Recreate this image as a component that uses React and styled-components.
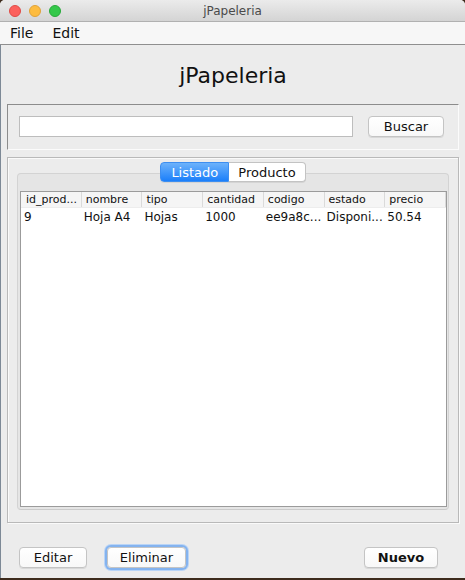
import React from "react";
import styled, { createGlobalStyle } from "styled-components";

const GlobalStyle = createGlobalStyle`
  html, body {
    margin: 0;
    padding: 0;
  }
  body {
    background: #3d2b1c;
    font-family: "DejaVu Sans", "Liberation Sans", sans-serif;
    color: #111;
  }
`;

const Window = styled.div`
  width: 465px;
  height: 578px;
  display: flex;
  flex-direction: column;
  background: #ececec;
  border-radius: 5px 5px 0 0;
  overflow: hidden;
`;

const TitleBar = styled.div`
  height: 22px;
  display: grid;
  grid-template-columns: 1fr auto 1fr;
  align-items: center;
  background: linear-gradient(#ebebeb, #d4d4d4);
  border-bottom: 1px solid #b1b1b1;
  box-sizing: border-box;
  font-size: 12px;
  color: #4a4a4a;
`;

const Lights = styled.div`
  display: flex;
  gap: 8px;
  padding-left: 9px;
`;

const Light = styled.span`
  width: 12px;
  height: 12px;
  border-radius: 50%;
  box-sizing: border-box;
  background: ${(p) => p.color};
  border: 1px solid ${(p) => p.edge};
`;

const MenuBar = styled.div`
  height: 22px;
  display: flex;
  align-items: center;
  gap: 19px;
  padding-left: 10px;
  background: #f7f7f7;
  border-bottom: 1px solid #8f8f8f;
  font-size: 14px;
  color: #111;
`;

const Content = styled.div`
  flex: 1;
  display: flex;
  flex-direction: column;
  padding: 0 6px 0 6px;
  border-left: 1px solid #7d8996;
`;

const Heading = styled.h1`
  margin: 0;
  height: 59px;
  display: flex;
  align-items: center;
  justify-content: center;
  padding-top: 2px;
  box-sizing: border-box;
  font-size: 22px;
  font-weight: normal;
  color: #111;
`;

const SearchPanel = styled.div`
  display: flex;
  align-items: center;
  padding: 11px 14px 12px 11px;
  border-top: 1px solid #8c8c8c;
  border-left: 1px solid #8c8c8c;
  border-bottom: 1px solid #fbfbfb;
  border-right: 1px solid #fbfbfb;
`;

const SearchInput = styled.div`
  flex: 1;
  height: 21px;
  box-sizing: border-box;
  background: #fff;
  border: 1px solid #bdbdbd;
`;

const Button = styled.button`
  height: 21px;
  width: ${(p) => p.w}px;
  margin-left: ${(p) => p.gap || 0}px;
  box-sizing: border-box;
  padding: 0;
  font-family: "DejaVu Sans", "Liberation Sans", sans-serif;
  font-size: 13px;
  font-weight: ${(p) => (p.primary ? "bold" : "normal")};
  color: #111;
  background: linear-gradient(#ffffff, #f8f8f8);
  border: 1px solid #c4c4c4;
  border-radius: 4px;
  box-shadow: ${(p) =>
    p.focused ? "0 0 0 2px #84b3ef, 0 0 0 3px #b9d4f6" : "0 1px 0 #d8d8d8"};
`;

const TabPanel = styled.div`
  margin-top: 7px;
  height: 366px;
  box-sizing: border-box;
  display: flex;
  flex-direction: column;
  padding: 4px 9px 12px 9px;
  border: 1px solid #b9b9b9;
  box-shadow: inset 1px 1px 0 #fafafa, 1px 1px 0 #fafafa;
`;

const TabsRow = styled.div`
  display: flex;
  justify-content: center;
  position: relative;
  z-index: 1;
`;

const Tab = styled.div`
  height: 20px;
  box-sizing: border-box;
  padding: 0 ${(p) => p.pad}px;
  display: flex;
  align-items: center;
  font-size: 13px;
  color: ${(p) => (p.active ? "#fff" : "#111")};
  background: ${(p) =>
    p.active ? "linear-gradient(#6cb2fb, #1b7ffa)" : "#fff"};
  border: 1px solid ${(p) => (p.active ? "#3d8ef0" : "#c3c3c3")};
  border-left-width: ${(p) => (p.active ? 1 : 0)}px;
  border-radius: ${(p) => (p.active ? "4px 0 0 4px" : "0 4px 4px 0")};
  box-shadow: 0 1px 0 #d4d4d4;
`;

const Pane = styled.div`
  flex: 1;
  margin-top: -9px;
  display: flex;
  flex-direction: column;
  padding: 17px 1px 2px 2px;
  background: #e5e5e5;
  border: 1px solid #d3d3d3;
  border-bottom-color: #cbcbcb;
  border-radius: 4px;
`;

const Table = styled.div`
  flex: 1;
  background: #fff;
  border: 1px solid #9b9b9b;
  display: flex;
  flex-direction: column;
`;

const Row = styled.div`
  display: grid;
  grid-template-columns: repeat(7, 1fr);
  height: ${(p) => (p.header ? 15 : 18)}px;
  background: ${(p) => (p.header ? "#f5f5f5" : "#fff")};
  border-bottom: ${(p) => (p.header ? "1px solid #ededed" : "none")};
`;

const Cell = styled.div`
  display: flex;
  align-items: center;
  overflow: hidden;
  white-space: nowrap;
  font-size: ${(p) => (p.header ? 11 : 12)}px;
  padding-left: ${(p) => (p.header ? 4 : 2)}px;
  color: #111;
  border-right: ${(p) => (p.header ? "1px solid #dadada" : "none")};
  &:first-child {
    padding-left: ${(p) => (p.header ? 5 : 3)}px;
  }
`;

const ButtonBar = styled.div`
  display: flex;
  align-items: center;
  margin-top: 24px;
  padding: 0 21px 0 12px;
`;

const columns = ["id_prod...", "nombre", "tipo", "cantidad", "codigo", "estado", "precio"];
const rows = [["9", "Hoja A4", "Hojas", "1000", "ee9a8c...", "Disponi...", "50.54"]];

const App = () => {
  return (
    <>
      <GlobalStyle />
      <Window>
        <TitleBar>
          <Lights>
            <Light color="#fc605c" edge="#de4b46" />
            <Light color="#fdbc40" edge="#dfa239" />
            <Light color="#34c84a" edge="#28a93a" />
          </Lights>
          <span>jPapeleria</span>
          <span />
        </TitleBar>
        <MenuBar>
          <span>File</span>
          <span>Edit</span>
        </MenuBar>
        <Content>
          <Heading>jPapeleria</Heading>
          <SearchPanel>
            <SearchInput />
            <Button w={76} gap={15}>Buscar</Button>
          </SearchPanel>
          <TabPanel>
            <TabsRow>
              <Tab active pad={10}>Listado</Tab>
              <Tab pad={9}>Producto</Tab>
            </TabsRow>
            <Pane>
              <Table>
                <Row header>
                  {columns.map((c) => (
                    <Cell header key={c}>{c}</Cell>
                  ))}
                </Row>
                {rows.map((r, i) => (
                  <Row key={i}>
                    {r.map((v, j) => (
                      <Cell key={j}>{v}</Cell>
                    ))}
                  </Row>
                ))}
              </Table>
            </Pane>
          </TabPanel>
          <ButtonBar>
            <Button w={68}>Editar</Button>
            <Button w={79} gap={20} focused>Eliminar</Button>
            <Button w={74} primary style={{ marginLeft: "auto" }}>Nuevo</Button>
          </ButtonBar>
        </Content>
      </Window>
    </>
  );
};

export default App;
